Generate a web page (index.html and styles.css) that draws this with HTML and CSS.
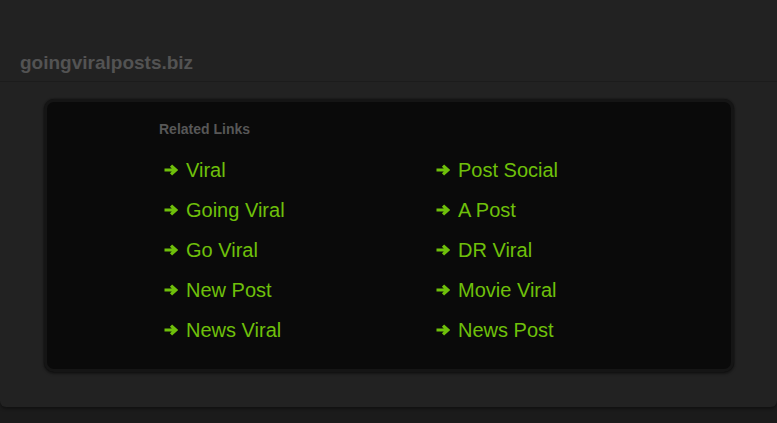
FILE: index.html
```html
<!DOCTYPE html>
<html>
<head>
<meta charset="utf-8">
<link rel="stylesheet" href="styles.css">
</head>
<body>
<div class="page">
  <header class="header"><span class="domain">goingviralposts.biz</span></header>
  <main class="main">
    <section class="box">
      <h2 class="title">Related Links</h2>
      <ul class="links">
        <li><svg class="arrow" viewBox="0 0 14 12"><path d="M0.5 6H11M7 1.6L11.8 6L7 10.4"/></svg><a href="#">Viral</a></li>
        <li><svg class="arrow" viewBox="0 0 14 12"><path d="M0.5 6H11M7 1.6L11.8 6L7 10.4"/></svg><a href="#">Going Viral</a></li>
        <li><svg class="arrow" viewBox="0 0 14 12"><path d="M0.5 6H11M7 1.6L11.8 6L7 10.4"/></svg><a href="#">Go Viral</a></li>
        <li><svg class="arrow" viewBox="0 0 14 12"><path d="M0.5 6H11M7 1.6L11.8 6L7 10.4"/></svg><a href="#">New Post</a></li>
        <li><svg class="arrow" viewBox="0 0 14 12"><path d="M0.5 6H11M7 1.6L11.8 6L7 10.4"/></svg><a href="#">News Viral</a></li>
        <li><svg class="arrow" viewBox="0 0 14 12"><path d="M0.5 6H11M7 1.6L11.8 6L7 10.4"/></svg><a href="#">Post Social</a></li>
        <li><svg class="arrow" viewBox="0 0 14 12"><path d="M0.5 6H11M7 1.6L11.8 6L7 10.4"/></svg><a href="#">A Post</a></li>
        <li><svg class="arrow" viewBox="0 0 14 12"><path d="M0.5 6H11M7 1.6L11.8 6L7 10.4"/></svg><a href="#">DR Viral</a></li>
        <li><svg class="arrow" viewBox="0 0 14 12"><path d="M0.5 6H11M7 1.6L11.8 6L7 10.4"/></svg><a href="#">Movie Viral</a></li>
        <li><svg class="arrow" viewBox="0 0 14 12"><path d="M0.5 6H11M7 1.6L11.8 6L7 10.4"/></svg><a href="#">News Post</a></li>
      </ul>
    </section>
  </main>
</div>
</body>
</html>
```

FILE: styles.css
```css
html, body {
  margin: 0;
  padding: 0;
}
body {
  background: #1b1b1b;
  font-family: "Liberation Sans", Arial, sans-serif;
  height: 423px;
  overflow: hidden;
}
.page {
  background: #222222;
  height: 407px;
  border-radius: 0 0 6px 6px;
  box-shadow: 0 2px 3px rgba(0, 0, 0, 0.35);
}
.header {
  height: 82px;
  box-sizing: border-box;
  border-bottom: 1px solid #1c1c1c;
  display: flex;
  align-items: flex-end;
  padding: 0 0 7px 20px;
}
.domain {
  font-size: 19px;
  line-height: 22px;
  font-weight: bold;
  color: #535353;
}
.main {
  padding-top: 17px;
}
.box {
  margin-left: 44px;
  width: 690px;
  height: 273px;
  box-sizing: border-box;
  background: #0a0a0a;
  border: 3px solid #151515;
  border-radius: 10px;
  box-shadow: 0 0 2px rgba(0, 0, 0, 0.6), 0 2px 3px rgba(0, 0, 0, 0.4);
  padding: 19px 0 0 117px;
}
.title {
  margin: 0 0 13px -5px;
  font-size: 14px;
  line-height: 16px;
  font-weight: bold;
  color: #575757;
}
.links {
  list-style: none;
  margin: 0;
  padding: 0;
  display: grid;
  grid-template-columns: 272px 272px;
  grid-template-rows: repeat(5, 40px);
  grid-auto-flow: column;
}
.links li {
  display: flex;
  align-items: center;
  font-size: 20px;
  line-height: 40px;
}
.arrow {
  width: 14px;
  height: 12px;
  margin-right: 8px;
  fill: none;
  stroke: #6fc00a;
  stroke-width: 3.2;
  stroke-linecap: butt;
}
.links a {
  color: #6fc00a;
  text-decoration: none;
}
```
